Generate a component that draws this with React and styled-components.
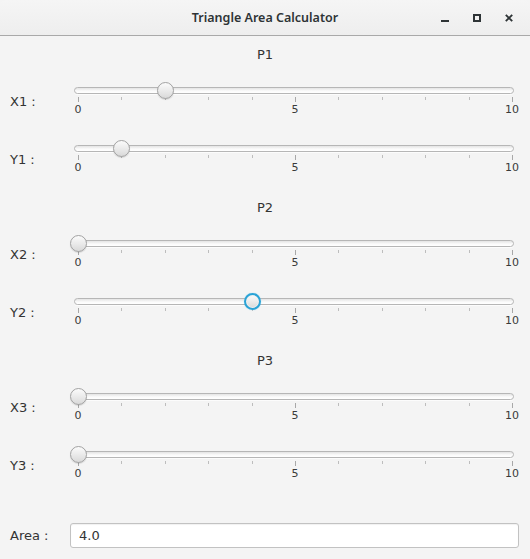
import React from 'react';
import styled, { createGlobalStyle } from 'styled-components';

const GlobalStyle = createGlobalStyle`
    html, body {
        margin: 0;
        padding: 0;
        background: #f4f4f4;
    }
    * {
        box-sizing: border-box;
    }
`;

const TRACK_W = 440;
const THUMB_MIN = 4;
const THUMB_RANGE = 434;

const sections = [
    { title: 'P1', rows: [{ name: 'X1', value: 2 }, { name: 'Y1', value: 1 }] },
    { title: 'P2', rows: [{ name: 'X2', value: 0 }, { name: 'Y2', value: 4, focused: true }] },
    { title: 'P3', rows: [{ name: 'X3', value: 0 }, { name: 'Y3', value: 0 }] }
];

function Slider({ value, focused }) {

    const ticks = [];
    for (let i = 0; i <= 10; i++) {
        ticks.push(
            <Tick key={i} $major={i % 5 === 0} style={{ left: THUMB_MIN + (i / 10) * THUMB_RANGE }} />
        );
    }

    return (
        <StyledSlider>
            <Track />
            {ticks}
            {[0, 5, 10].map((n) => (
                <TickLabel key={n} style={{ left: THUMB_MIN + (n / 10) * THUMB_RANGE }}>{n}</TickLabel>
            ))}
            <Thumb $focused={focused} style={{ left: THUMB_MIN + (value / 10) * THUMB_RANGE }} />
        </StyledSlider>
    );
}

export default function App() {
    return (
        <Window>
            <GlobalStyle />
            <TitleBar>
                <Title>Triangle Area Calculator</Title>
                <Controls>
                    <WinButton aria-label="minimize">
                        <svg width="8" height="8" viewBox="0 0 8 8"><rect x="0" y="6" width="8" height="2" fill="#2e3436" /></svg>
                    </WinButton>
                    <WinButton aria-label="maximize">
                        <svg width="8" height="8" viewBox="0 0 8 8"><rect x="1" y="1" width="6" height="6" fill="none" stroke="#2e3436" strokeWidth="2" /></svg>
                    </WinButton>
                    <WinButton aria-label="close">
                        <svg width="8" height="8" viewBox="0 0 8 8"><path d="M0.8 0.8 L7.2 7.2 M7.2 0.8 L0.8 7.2" stroke="#2e3436" strokeWidth="1.9" /></svg>
                    </WinButton>
                </Controls>
            </TitleBar>

            <Content>
                {sections.map((section) => (
                    <Section key={section.title}>
                        <SectionTitle>{section.title}</SectionTitle>
                        {section.rows.map((row) => (
                            <Row key={row.name}>
                                <RowLabel>{row.name} :</RowLabel>
                                <Slider value={row.value} focused={row.focused} />
                            </Row>
                        ))}
                    </Section>
                ))}

                <AreaRow>
                    <AreaLabel>Area :</AreaLabel>
                    <AreaField readOnly value="4.0" />
                </AreaRow>
            </Content>
        </Window>
    );
}

const Window = styled.div`
    width: 530px;
    height: 559px;
    background: #f4f4f4;
    font-family: "DejaVu Sans", Verdana, sans-serif;
    color: #333;
    overflow: hidden;
`;

const TitleBar = styled.div`
    position: relative;
    height: 36px;
    display: flex;
    align-items: center;
    justify-content: center;
    background: linear-gradient(#f5f5f5, #eeeeee);
    border-bottom: 1px solid #a9a9a9;
    border-radius: 6px 6px 0 0;
`;

const Title = styled.div`
    font-family: "Noto Sans", "Open Sans", sans-serif;
    font-weight: 600;
    font-size: 12.5px;
    color: #2e3436;
`;

const Controls = styled.div`
    position: absolute;
    right: 4px;
    top: 0;
    height: 35px;
    display: flex;
    align-items: center;
`;

const WinButton = styled.div`
    width: 34px;
    height: 26px;
    display: flex;
    align-items: center;
    justify-content: center;
    margin-left: -2px;

    svg {
        display: block;
    }
`;

const Content = styled.div`
    padding-top: 8px;
`;

const Section = styled.div`
    margin-top: 1px;
    margin-bottom: 7px;
`;

const SectionTitle = styled.div`
    height: 20px;
    line-height: 20px;
    text-align: center;
    font-size: 13px;
    color: #333;
    margin-bottom: 10px;
`;

const Row = styled.div`
    height: 58px;
    display: grid;
    grid-template-columns: 74px ${TRACK_W}px;
`;

const RowLabel = styled.div`
    padding-left: 10px;
    padding-top: 18px;
    font-size: 13px;
    line-height: 18px;
    color: #333;
`;

const StyledSlider = styled.div`
    position: relative;
    height: 58px;
`;

const Track = styled.div`
    position: absolute;
    left: 0;
    top: 12px;
    width: ${TRACK_W}px;
    height: 7px;
    border-radius: 4px;
    border: 1px solid #b6b6b6;
    background: linear-gradient(#e4e4e4, #fbfbfb 60%, #ffffff);
    box-shadow: 0 1px 0 rgba(255, 255, 255, 0.7);
`;

const Tick = styled.div`
    position: absolute;
    top: 22px;
    width: 1px;
    height: ${(p) => (p.$major ? '5px' : '3px')};
    background: ${(p) => (p.$major ? '#a8a8a8' : '#bdbdbd')};
`;

const TickLabel = styled.div`
    position: absolute;
    top: 28px;
    transform: translateX(-50%);
    font-size: 11px;
    line-height: 14px;
    color: #3a3a3a;
`;

const Thumb = styled.div`
    position: absolute;
    top: 7px;
    width: 17px;
    height: 17px;
    margin-left: -8px;
    border-radius: 50%;
    background: linear-gradient(#fbfbfb, #e9e9e9 55%, #d9d9d9);
    border: ${(p) => (p.$focused ? '2px solid #2aa3d6' : '1px solid #a2a2a2')};
    box-shadow: ${(p) => (p.$focused
        ? 'inset 0 0 0 1px #f0f0f0, 0 0 1px #7ccbec'
        : '0 1px 1px rgba(0, 0, 0, 0.12)')};
`;

const AreaRow = styled.div`
    display: flex;
    align-items: center;
    margin-top: 26px;
    height: 25px;
`;

const AreaLabel = styled.div`
    width: 70px;
    padding-left: 10px;
    font-size: 13px;
    color: #333;
`;

const AreaField = styled.input`
    width: 449px;
    height: 25px;
    border: 1px solid #c2c2c2;
    border-radius: 3px;
    background: #ffffff;
    box-shadow: inset 0 1px 1px rgba(0, 0, 0, 0.06);
    padding: 0 8px;
    font-family: "DejaVu Sans", Verdana, sans-serif;
    font-size: 13px;
    color: #333;
    outline: none;
`;
